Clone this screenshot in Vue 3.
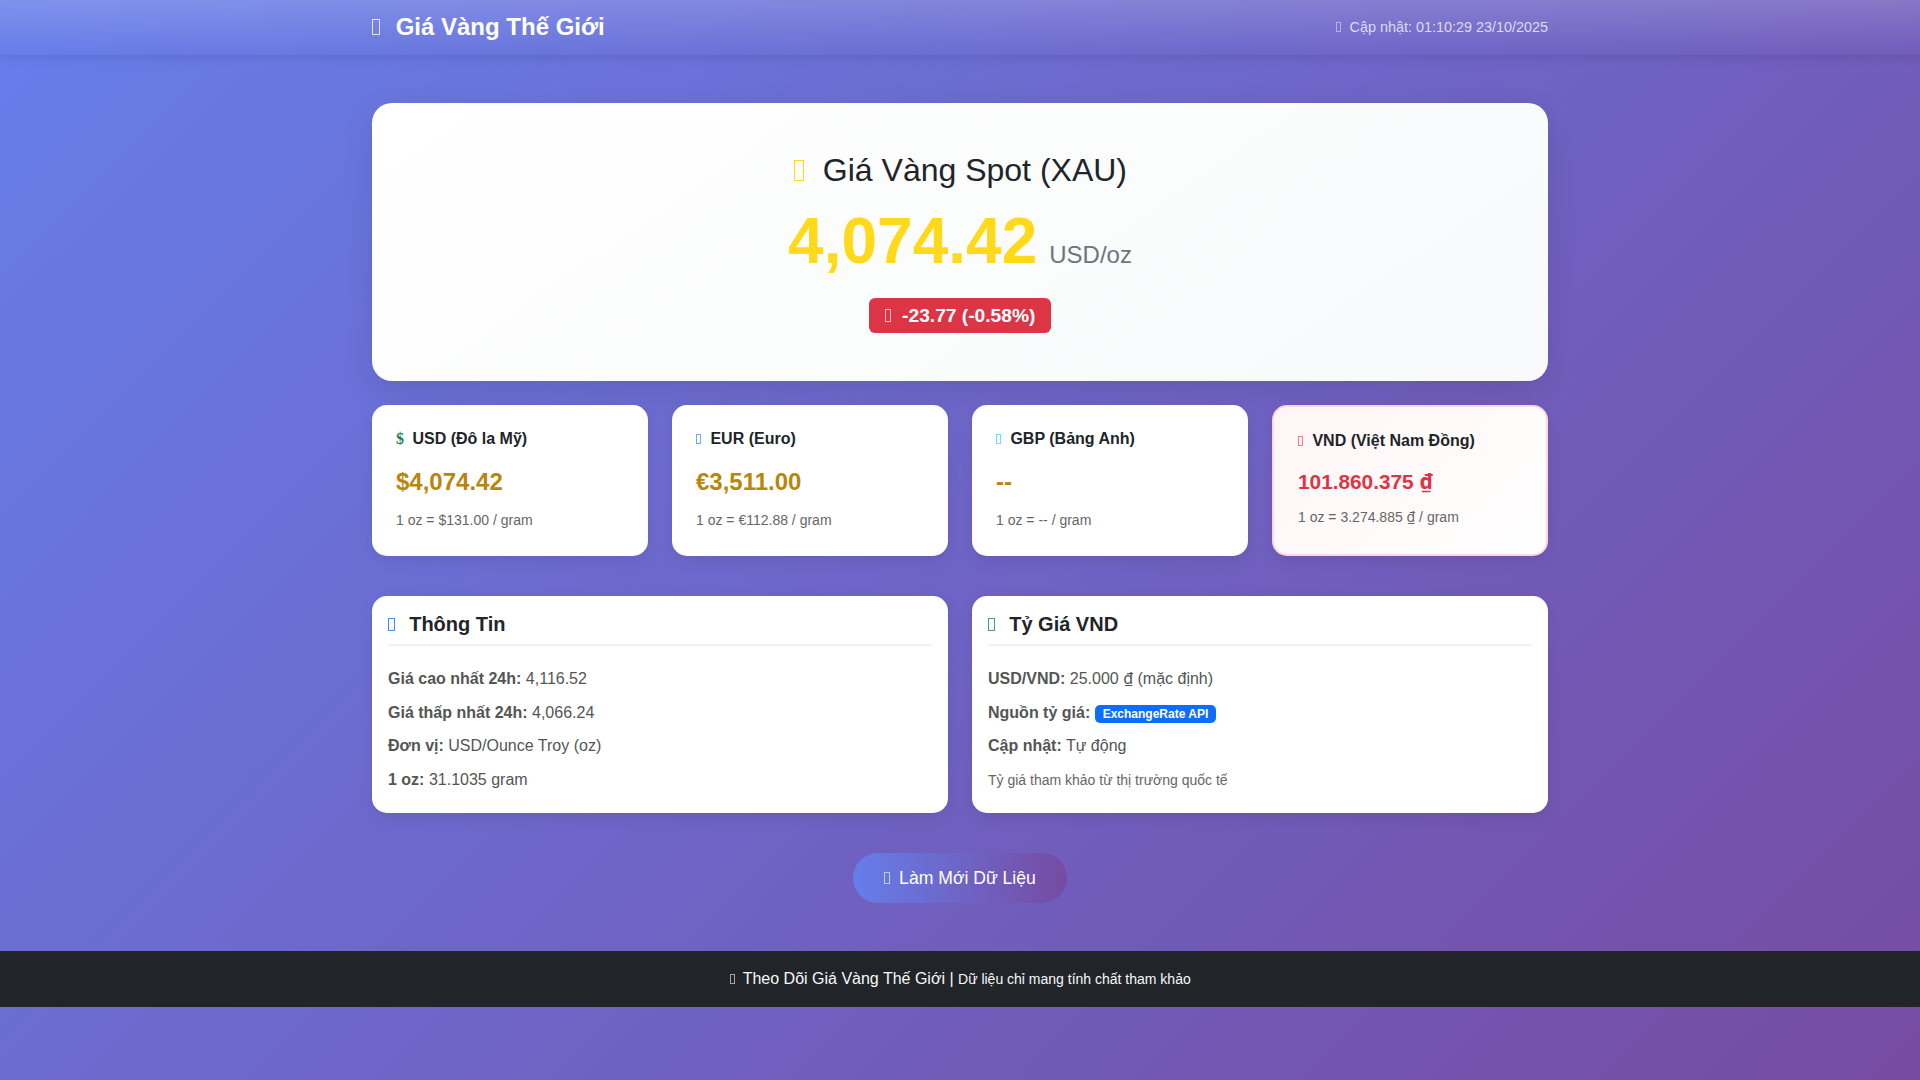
<template>
  <div class="page">
    <nav class="navbar">
      <div class="container nav-inner">
        <span class="brand"><i class="tofu brand-icon"></i>Giá Vàng Thế Giới</span>
        <span class="updated"><i class="tofu updated-icon"></i>Cập nhật: 01:10:29 23/10/2025</span>
      </div>
    </nav>

    <main class="container content">
      <section class="hero">
        <h2 class="hero-title"><i class="tofu hero-icon"></i>Giá Vàng Spot (XAU)</h2>
        <div class="hero-price">
          <span class="price">4,074.42</span>
          <span class="unit">USD/oz</span>
        </div>
        <div class="change"><i class="tofu change-icon"></i>-23.77 (-0.58%)</div>
      </section>

      <section class="currency-grid">
        <div v-for="item in currencies" :key="item.code" :class="['currency-card', item.featured && 'featured']">
          <h6 class="currency-name">
            <i v-if="item.glyph" class="dollar success">{{ item.glyph }}</i>
            <i v-else :class="['tofu', 'currency-icon', item.tone]"></i>{{ item.name }}
          </h6>
          <div class="currency-value">{{ item.value }}<span v-if="item.featured" class="dong">₫</span></div>
          <div class="currency-sub">
            <small>{{ item.sub }}<span v-if="item.featured" class="dong">₫</span>{{ item.subEnd }}</small>
          </div>
        </div>
      </section>

      <section class="info-grid">
        <div class="info-card">
          <h5 class="info-title"><i class="tofu info-icon primary"></i>Thông Tin</h5>
          <p><strong>Giá cao nhất 24h:</strong> 4,116.52</p>
          <p><strong>Giá thấp nhất 24h:</strong> 4,066.24</p>
          <p><strong>Đơn vị:</strong> USD/Ounce Troy (oz)</p>
          <p><strong>1 oz:</strong> 31.1035 gram</p>
        </div>
        <div class="info-card">
          <h5 class="info-title"><i class="tofu info-icon success"></i>Tỷ Giá VND</h5>
          <p><strong>USD/VND:</strong> 25.000 <span class="dong">₫</span> (mặc định)</p>
          <p><strong>Nguồn tỷ giá:</strong> <span class="pill">ExchangeRate API</span></p>
          <p><strong>Cập nhật:</strong> Tự động</p>
          <p><small>Tỷ giá tham khảo từ thị trường quốc tế</small></p>
        </div>
      </section>

      <div class="refresh-row">
        <button class="refresh"><i class="tofu refresh-icon"></i>Làm Mới Dữ Liệu</button>
      </div>
    </main>

    <footer class="footer">
      <i class="tofu footer-icon"></i>Theo Dõi Giá Vàng Thế Giới | <small>Dữ liệu chỉ mang tính chất tham khảo</small>
    </footer>
  </div>
</template>

<script setup>
const currencies = [
  { code: 'usd', glyph: '$', name: 'USD (Đô la Mỹ)', value: '$4,074.42', sub: '1 oz = $131.00 / gram' },
  { code: 'eur', tone: 'primary', name: 'EUR (Euro)', value: '€3,511.00', sub: '1 oz = €112.88 / gram' },
  { code: 'gbp', tone: 'info', name: 'GBP (Bảng Anh)', value: '--', sub: '1 oz = -- / gram' },
  { code: 'vnd', tone: 'danger', name: 'VND (Việt Nam Đồng)', value: '101.860.375 ', sub: '1 oz = 3.274.885 ', subEnd: ' / gram', featured: true },
]
</script>

<style>
html,
body {
  margin: 0;
  min-height: 100vh;
}

body {
  background: linear-gradient(135deg, #667eea 0%, #764ba2 100%);
  font-family: 'Liberation Sans', Arial, sans-serif;
  font-size: 16px;
  line-height: 1.5;
  color: #212529;
}
</style>

<style scoped>
/* missing icon font: the icons show up as empty boxes */
.tofu {
  display: inline-block;
  box-sizing: border-box;
  width: 0.32em;
  height: 0.65em;
  margin-left: 0.02em;
  border: 1px solid currentColor;
}

.dollar {
  display: inline-block;
  margin-right: 8.5px;
  font-family: 'Liberation Serif', serif;
  font-style: normal;
  font-weight: 900;
  line-height: 1;
}

.dong {
  font-family: 'Noto Sans', sans-serif;
  line-height: 1;
}

.success { color: #198754; }
.primary { color: #0d6efd; }
.info { color: #0dcaf0; }
.danger { color: #dc3545; }

.container {
  box-sizing: border-box;
  width: 1200px;
  margin: 0 auto;
  padding: 0 12px;
}

.navbar {
  height: 55px;
  background: linear-gradient(180deg, rgba(255, 255, 255, 0.16), rgba(255, 255, 255, 0));
  box-shadow: 0 2px 10px rgba(0, 0, 0, 0.1);
}

.nav-inner {
  height: 100%;
  display: flex;
  align-items: center;
  justify-content: space-between;
}

.brand {
  padding-bottom: 2px;
  font-size: 24px;
  font-weight: 700;
  color: #fff;
}

.brand-icon {
  margin-right: 15.5px;
  opacity: 0.8;
}

.updated {
  font-size: 14.4px;
  color: rgba(255, 255, 255, 0.75);
}

.updated-icon {
  margin-right: 9px;
  opacity: 0.6;
}

.content {
  padding-top: 48px;
}

.hero {
  padding: 48px;
  border-radius: 20px;
  background: linear-gradient(145deg, #ffffff, #f8f9fa);
  box-shadow: 0 10px 30px rgba(0, 0, 0, 0.1);
  text-align: center;
}

.hero-title {
  margin: 0 0 8px;
  font-size: 32px;
  font-weight: 400;
  line-height: 1.2;
}

.hero-icon {
  margin-right: 19px;
  color: #ffd91a;
}

.hero-price {
  margin-bottom: 11px;
}

.price {
  font-size: 64px;
  font-weight: 700;
  line-height: 89.5px;
  color: #ffd91a;
}

.unit {
  margin-left: 12px;
  font-size: 24px;
  line-height: 1;
  color: #6c757d;
}

.change {
  display: inline-block;
  padding: 8px 16px;
  border-radius: 6px;
  background: #dc3545;
  font-size: 19.2px;
  font-weight: 700;
  line-height: 1;
  color: #fff;
  vertical-align: top;
}

.change-icon {
  margin-right: 11px;
  opacity: 0.7;
}

.currency-grid {
  display: grid;
  grid-template-columns: repeat(4, 1fr);
  gap: 24px;
  margin-top: 24px;
}

.currency-card {
  padding: 24px;
  border-radius: 15px;
  background: #fff;
  box-shadow: 0 5px 15px rgba(0, 0, 0, 0.08);
}

.currency-card.featured {
  border: 2px solid #ffd6da;
  background: linear-gradient(135deg, #fff5f5, #ffffff);
}

.currency-name {
  margin: 0 0 16px;
  font-size: 16px;
  font-weight: 700;
  line-height: 1.2;
}

.currency-icon {
  margin-right: 9px;
  opacity: 0.6;
}

.currency-value {
  margin-bottom: 8px;
  font-size: 24px;
  font-weight: 700;
  color: #b8860b;
}

.featured .currency-value {
  font-size: 20.8px;
  color: #dc3545;
}

.currency-sub {
  color: #666;
}

small {
  font-size: 14px;
}

.info-grid {
  display: grid;
  grid-template-columns: repeat(2, 1fr);
  gap: 24px;
  margin-top: 40px;
}

.info-card {
  padding: 16px;
  border-radius: 15px;
  background: #fff;
  box-shadow: 0 5px 15px rgba(0, 0, 0, 0.08);
}

.info-title {
  margin: 0 0 16px;
  padding-bottom: 8px;
  border-bottom: 2px solid #f0f0f0;
  font-size: 20px;
  font-weight: 700;
  line-height: 1.2;
}

.info-icon {
  margin-right: 14.4px;
  opacity: 0.8;
}

.info-card p {
  margin: 0;
  padding: 4.8px 0;
  color: #555;
}

.info-card small {
  color: #666;
}

.pill {
  display: inline-block;
  padding: 3px 8px;
  border-radius: 5px;
  background: #0d6efd;
  font-size: 12px;
  font-weight: 700;
  line-height: 1;
  color: #fff;
}

.refresh-row {
  margin: 40px 0 48px;
  text-align: center;
}

.refresh {
  padding: 12px 31px;
  border: none;
  border-radius: 25px;
  background: linear-gradient(90deg, #667eea, #764ba2);
  font-family: inherit;
  font-size: 17.6px;
  line-height: 1.5;
  color: #fff;
  cursor: pointer;
}

.refresh-icon {
  margin-right: 9px;
  opacity: 0.6;
}

.footer {
  padding: 16px 0;
  background: #212529;
  text-align: center;
  color: #f8f9fa;
}

.footer-icon {
  margin-right: 8px;
  opacity: 0.6;
}
</style>
